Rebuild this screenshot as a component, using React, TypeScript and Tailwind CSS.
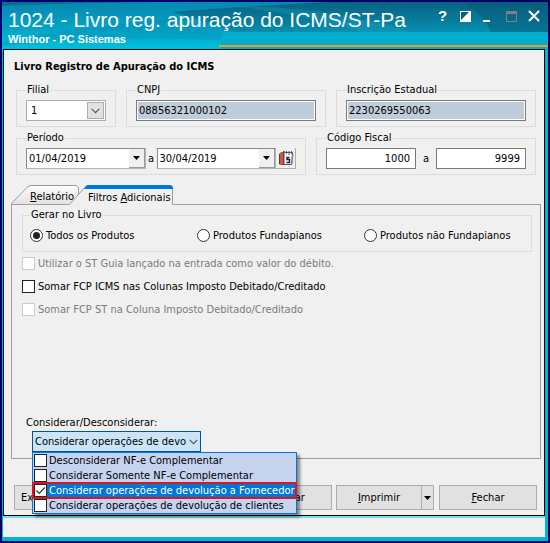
import { useState } from "react";
import type { ReactNode } from "react";

const radios = ["Todos os Produtos", "Produtos Fundapianos", "Produtos não Fundapianos"];

const filters = [
  { label: "Utilizar o ST Guia lançado na entrada como valor do débito.", disabled: true },
  { label: "Somar FCP ICMS nas Colunas Imposto Debitado/Creditado", disabled: false },
  { label: "Somar FCP ST na Coluna Imposto Debitado/Creditado", disabled: true },
];

const operations = [
  "Desconsiderar NF-e Complementar",
  "Considerar Somente NF-e Complementar",
  "Considerar operações de devolução a Fornecedor",
  "Considerar operações de devolução de clientes",
];

function Group({ title, className, children }: { title: string; className: string; children: ReactNode }) {
  return (
    <fieldset className={`min-w-0 border border-[#dcdcdc] pb-[5px] ${className}`}>
      <legend className="h-[14px] px-px leading-[14px]">{title}</legend>
      {children}
    </fieldset>
  );
}

function Chevron() {
  return (
    <svg viewBox="0 0 9 6" className="h-[6px] w-[9px] shrink-0" fill="none" stroke="#555" strokeWidth="1.2">
      <path d="M.7.8 4.5 4.6 8.3.8" />
    </svg>
  );
}

function Triangle() {
  return (
    <svg viewBox="0 0 7 4" className="h-[4px] w-[7px]">
      <path d="M0 0h7L3.5 4z" fill="#000" />
    </svg>
  );
}

function DateField({ label, value }: { label: string; value: string }) {
  return (
    <div className="flex h-[21px] min-w-0 flex-1 border border-[#8a8a8a] border-r-[#b5b5b5] border-b-[#b5b5b5] bg-white">
      <input aria-label={label} defaultValue={value} className="w-0 flex-1 px-[2px] outline-none" />
      <button
        aria-label={`Abrir ${label}`}
        className="flex w-[16px] items-center justify-center border-r border-b border-[#9a9a9a] bg-[#f0f0f0]"
      >
        <Triangle />
      </button>
    </div>
  );
}

function CheckBox({ checked, disabled, label, onChange }: {
  checked?: boolean;
  disabled?: boolean;
  label: string;
  onChange?: () => void;
}) {
  return (
    <span className="relative flex size-[13px] shrink-0">
      <input
        type="checkbox"
        aria-label={label}
        checked={onChange ? checked : undefined}
        onChange={onChange}
        disabled={disabled}
        className="size-[13px] appearance-none border border-[#222] bg-white disabled:border-[#ccc]"
      />
      {checked && (
        <svg viewBox="0 0 13 13" className="pointer-events-none absolute inset-0" fill="none" stroke="#333" strokeWidth="1.2">
          <path d="M2.5 6.5 5.2 9.3 10.8 3.5" />
        </svg>
      )}
    </span>
  );
}

function HeaderArt() {
  return (
    <svg className="absolute inset-0 h-full w-full" viewBox="0 0 546 47" preserveAspectRatio="none">
      <defs>
        <linearGradient id="sky" x1="0" y1="0" x2="0" y2="1">
          <stop offset="0" stopColor="#0787ae" />
          <stop offset=".5" stopColor="#049fc3" />
          <stop offset="1" stopColor="#00bfdc" />
        </linearGradient>
        <linearGradient id="deep" x1="0" y1="0" x2="0" y2="1">
          <stop offset="0" stopColor="#075572" />
          <stop offset="1" stopColor="#0787a7" />
        </linearGradient>
      </defs>
      <path d="M0 0h546v47H0z" fill="url(#sky)" />
      <path d="M0 0h150Q60 1 0 4z" fill="#076184" opacity=".7" />
      <path d="M0 40Q70 24 230 12L290 4V30H219V38Q90 34 0 44z" fill="#0385a8" opacity=".25" />
      <path d="M170 10Q260 3 330 0H546V30H230Q215 22 170 10z" fill="url(#deep)" opacity=".75" />
      <path d="M230 4Q330 5 410 30H360Q300 12 230 4z" fill="#1ba5c5" opacity=".3" />
      <path d="M458 0Q480 10 489 30H546V0z" fill="#075a78" opacity=".5" />
      <path d="M219 31h327v16H219z" fill="#03adcf" />
      <path d="M217 43h329v2H217z" fill="#f79a1c" />
    </svg>
  );
}

function TitleButtons() {
  return (
    <div className="flex items-center gap-[9px] pr-[7px]">
      <button aria-label="Ajuda" className="h-[16px] w-[13px] font-['Liberation_Sans'] text-[15px] leading-[16px] font-bold text-white">
        ?
      </button>
      <button aria-label="Tema" className="size-[14px]">
        <svg viewBox="0 0 14 14">
          <path d="M2 2h11v11H2z" fill="#fff" />
          <path d="M3 11V3h8z" fill="#075f79" />
        </svg>
      </button>
      <button aria-label="Minimizar" className="size-[14px]">
        <svg viewBox="0 0 14 14">
          <path d="M2 11h7v2H2z" fill="#fff" />
        </svg>
      </button>
      <button aria-label="Maximizar" className="size-[14px]">
        <svg viewBox="0 0 14 14" fill="none" stroke="#857e80">
          <path d="M2.5 2.5h10v10h-10zM2 3.5h11M2 4.5h11" />
        </svg>
      </button>
      <button aria-label="Fechar janela" className="size-[14px]">
        <svg viewBox="0 0 14 14" stroke="#fff" strokeWidth="2">
          <path d="M2 2l10 10M12 2 2 12" />
        </svg>
      </button>
    </div>
  );
}

function CalendarIcon() {
  return (
    <svg viewBox="0 0 16 16" className="size-[16px]">
      <path d="M1 4 3 2h3v13H2L1 14z" fill="#c85a3c" />
      <path d="M1.500 4v10M5.500 2v13" stroke="#5a3a3a" />
      <path d="M6 2.500h8.500L13.500 14.500H6z" fill="#fff" stroke="#55555f" />
      <path d="M4.500 3 6 1 7.500 3M8.500 1v3M11 1v4M13.500 1v3" fill="none" stroke="#55555f" />
      <path d="M11.500 7.500h-2.500v2h2.500v3H8.500" fill="none" stroke="#161655" strokeWidth="1.400" />
      <path d="M15 4 14 14" stroke="#888" />
    </svg>
  );
}

const actionButton = "h-[25px] border border-[#adadad] bg-[#e1e1e1]";

export default function App() {
  const [selected, setSelected] = useState([2]);
  const [book, setBook] = useState(0);

  const toggle = (i: number) =>
    setSelected(selected.includes(i) ? selected.filter((n) => n !== i) : [...selected, i]);

  return (
    <div className="flex min-h-screen flex-col bg-[#000066] p-[2px] font-['DejaVu_Sans_Condensed','DejaVu_Sans',sans-serif] text-[11px] leading-[14px] text-black [font-stretch:condensed]">
      <div className="flex flex-1 flex-col bg-[#00b4cc]">
        <header className="relative h-[47px] font-['Liberation_Sans',sans-serif] text-white">
          <HeaderArt />
          <div className="relative flex items-start justify-between pt-[6px] pl-[6px]">
            <div className="min-w-0">
              <h1 className="text-[21px] leading-[24px] whitespace-nowrap">
                1024 - Livro reg. apuração do ICMS/ST-Pa
              </h1>
              <p className="text-[11px] leading-[14px] font-bold">Winthor - PC Sistemas</p>
            </div>
            <TitleButtons />
          </div>
        </header>

        <main className="mr-[3px] ml-px flex flex-1 flex-col border border-black bg-[#f0f0f0] pb-[5px]">
          <div className="flex flex-col gap-[4px] pt-[9px] pr-[8px] pl-[12px]">
            <h2 className="mb-[4px] -ml-[2px] leading-[16px] font-bold">Livro Registro de Apuração do ICMS</h2>

            <div className="flex gap-[10px]">
              <Group title="Filial" className="w-[100px] px-[9px]">
                <div className="relative mt-[3px]">
                  <select
                    aria-label="Filial"
                    className="block h-[21px] w-full appearance-none border border-[#adadad] bg-white pl-[4px] outline-none"
                  >
                    <option>1</option>
                  </select>
                  <span className="pointer-events-none absolute top-[2px] right-[2px] flex h-[17px] w-[17px] items-center justify-center border border-[#adadad] bg-[#e1e1e1]">
                    <Chevron />
                  </span>
                </div>
              </Group>
              <Group title="CNPJ" className="flex-1 px-[9px]">
                <input
                  aria-label="CNPJ"
                  readOnly
                  value="08856321000102"
                  className="mt-[3px] block h-[21px] w-full border border-[#7a7a7a] bg-[#bfcddb] px-[2px] shadow-[inset_0_0_0_1px_#fff] outline-none"
                />
              </Group>
              <Group title="Inscrição Estadual" className="flex-1 px-[9px]">
                <input
                  aria-label="Inscrição Estadual"
                  readOnly
                  value="2230269550063"
                  className="mt-[3px] block h-[21px] w-full border border-[#7a7a7a] bg-[#bfcddb] px-[2px] shadow-[inset_0_0_0_1px_#fff] outline-none"
                />
              </Group>
            </div>

            <div className="flex gap-[10px]">
              <Group title="Período" className="flex-[27] px-[9px]">
                <div className="mt-[3px] flex items-center">
                  <DateField label="Data inicial" value="01/04/2019" />
                  <span className="w-[11px] text-center">a</span>
                  <DateField label="Data final" value="30/04/2019" />
                  <button
                    aria-label="Calendário"
                    className="flex h-[21px] w-[20px] items-center justify-center border-r border-b border-[#adadad]"
                  >
                    <CalendarIcon />
                  </button>
                </div>
              </Group>
              <Group title="Código Fiscal" className="flex-[20] px-[9px]">
                <div className="mt-[3px] flex items-center">
                  <input
                    aria-label="Código inicial"
                    defaultValue="1000"
                    className="h-[21px] w-0 flex-1 border border-[#7a7a7a] bg-white px-[5px] text-right outline-none"
                  />
                  <span className="w-[20px] text-center">a</span>
                  <input
                    aria-label="Código final"
                    defaultValue="9999"
                    className="h-[21px] w-0 flex-1 border border-[#7a7a7a] bg-white px-[5px] text-right outline-none"
                  />
                </div>
              </Group>
            </div>
          </div>

          <div role="tablist" className="mt-[10px] ml-[7px] flex">
            <button role="tab" aria-selected="false" className="relative h-[19px] w-[68px] pt-[5px] pl-[19px] text-left leading-[14px]">
              <svg viewBox="0 0 68 19" className="absolute inset-0 h-[19px] w-[68px]">
                <defs>
                  <linearGradient id="tab" x1="0" y1="0" x2="0" y2="1">
                    <stop offset="0" stopColor="#fdfdfd" />
                    <stop offset="1" stopColor="#e2e2e2" />
                  </linearGradient>
                </defs>
                <path d="M0 19 16 2.500Q18 .5 20 .5H65.500L67.500 2.500V19" fill="url(#tab)" stroke="#9b9b9b" />
              </svg>
              <span className="relative">
                <u>R</u>elatório
              </span>
            </button>
            <button role="tab" aria-selected="true" className="relative z-10 -mb-px -ml-[10px] h-[20px] w-[104px] pt-[5px] pl-[19px] text-left leading-[14px] whitespace-nowrap">
              <svg viewBox="0 0 104 20" className="absolute inset-0 h-[20px] w-[104px]">
                <path d="M0 20 17 1H101.500L103.500 3V20z" fill="#f0f0f0" />
                <path d="M.5 19.500 17 1M103.500 3V19" fill="none" stroke="#9b9b9b" />
                <path d="M15 4 18 0H102L104 2V4z" fill="#0078d7" />
              </svg>
              <span className="relative">
                Filtros <u>A</u>dicionais
              </span>
            </button>
          </div>

          <section className="mr-[3px] ml-[7px] flex flex-1 flex-col border border-[#a0a0a0] pt-[3px] pr-[8px] pb-[6px] pl-[10px]">
            <Group title="Gerar no Livro" className="pl-[7px]">
              <div className="mt-[3px] grid grid-cols-3">
                {radios.map((label, i) => (
                  <label key={label} className="flex h-[21px] items-center gap-[3px] whitespace-nowrap">
                    <input
                      type="radio"
                      name="livro"
                      checked={book === i}
                      onChange={() => setBook(i)}
                      className="flex size-[13px] appearance-none items-center justify-center rounded-full border border-[#333] bg-white checked:before:size-[7px] checked:before:rounded-full checked:before:bg-[#222]"
                    />
                    {label}
                  </label>
                ))}
              </div>
            </Group>

            <div className="flex flex-col">
              {filters.map(({ label, disabled }) => (
                <label
                  key={label}
                  className={`flex h-[23px] items-center gap-[3px] ${disabled ? "text-[#7b7b7b]" : ""}`}
                >
                  <CheckBox label={label} disabled={disabled} />
                  {label}
                </label>
              ))}
            </div>

            <div className="mt-auto pl-[4px]">
              <p>Considerar/Desconsiderar:</p>
              <div className="relative mt-px ml-[6px] w-[169px]">
                <button
                  aria-haspopup="true"
                  aria-expanded="true"
                  className="flex h-[21px] w-full items-center justify-between border border-[#005499] bg-[#cce4f7] px-[2px]"
                >
                  <span className="whitespace-nowrap">Considerar operações de devo</span>
                  <Chevron />
                </button>
                <div className="absolute top-full left-0 z-20 w-[265px] border border-[#0078d7] bg-[#c5d3ef] shadow-[3px_3px_3px_rgba(0,0,0,0.45)]">
                  {operations.map((label, i) => (
                    <label
                      key={label}
                      className={`flex h-[15px] items-center gap-[2px] pl-px whitespace-nowrap ${
                        i === 2 ? "bg-[#0078d7] text-white outline-2 -outline-offset-1 outline-[#dd1522]" : ""
                      }`}
                    >
                      <CheckBox label={label} checked={selected.includes(i)} onChange={() => toggle(i)} />
                      {label}
                    </label>
                  ))}
                </div>
              </div>
            </div>
          </section>

          <div className="mt-[26px] flex pr-[7px] pl-[10px]">
            <button className={`${actionButton} mr-[6px] flex-1 pl-[6px] text-left`}>Exportar</button>
            <button className={`${actionButton} mr-[4px] w-[98px]`}>Executar</button>
            <button className={`${actionButton} w-[86px]`}>
              <u>I</u>mprimir
            </button>
            <button aria-label="Opções de impressão" className={`${actionButton} mr-[5px] -ml-px flex w-[13px] items-center justify-center`}>
              <Triangle />
            </button>
            <button className={`${actionButton} w-[98px]`}>
              <u>F</u>echar
            </button>
          </div>
        </main>

        <footer className="mr-[3px] mb-[4px] ml-px h-[21px] border-t-2 border-[#7fdbe6] bg-[#f0f0f0]" />
      </div>
    </div>
  );
}
